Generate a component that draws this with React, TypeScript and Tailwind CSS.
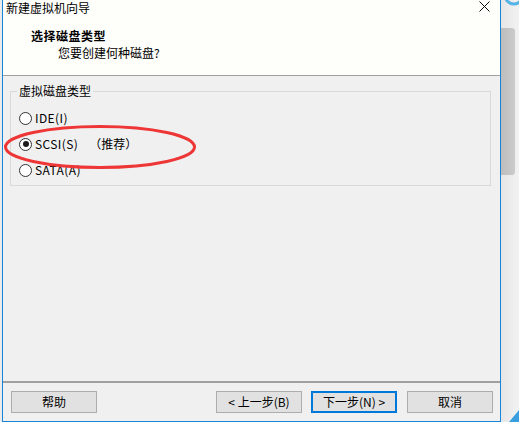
import React from 'react';

const font = { fontFamily: '"Noto Sans CJK SC", "Microsoft YaHei", sans-serif' };

const Radio: React.FC<{ checked?: boolean; label: string; extra?: string }> = ({ checked, label, extra }) => (
  <div className="flex h-[26px] items-center">
    <span className="flex h-[13px] w-[13px] items-center justify-center rounded-full border border-[#333] bg-white">
      {checked && <span className="h-[6px] w-[6px] rounded-full bg-[#1a1a1a]" />}
    </span>
    <span className="ml-[3px] text-[12px] leading-none tracking-[0.4px] text-black">{label}</span>
    {extra && <span className="ml-[11px] text-[12px] leading-none text-black">{extra}</span>}
  </div>
);

const Button: React.FC<{ label: string; primary?: boolean }> = ({ label, primary }) => (
  <button
    className={
      primary
        ? 'flex h-[22px] w-[86px] items-center justify-center border-2 border-[#0078d7] bg-[#e1e1e1] text-[12px] text-black'
        : 'flex h-[22px] w-[86px] items-center justify-center border border-[#adadad] bg-[#e1e1e1] text-[12px] text-black'
    }
  >
    {label}
  </button>
);

export default function App() {
  return (
    <div className="relative flex h-[422px] w-[519px] overflow-hidden bg-[#ebebeb]" style={font}>
      {/* window */}
      <div className="ml-[2px] flex h-[422px] w-[499px] flex-col border-x border-b border-[#1883d7] bg-[#f0f0f0]">
        {/* title bar */}
        <div className="flex h-[20px] items-start justify-between bg-[#fefefb] pl-[3px] pr-[10px]">
          <span className="text-[12px] leading-[15px] text-black">新建虚拟机向导</span>
          <svg width="11" height="11" viewBox="0 0 11 11" className="mt-[1px]">
            <path d="M0.5 0.5 L10.5 10.5 M10.5 0.5 L0.5 10.5" stroke="#111" strokeWidth="1" />
          </svg>
        </div>
        {/* header */}
        <div className="h-[56px] border-b border-[#a0a0a0] bg-[#fefefb] pl-[28px] pt-[9px]">
          <div className="text-[12px] font-bold leading-[14px] tracking-[0.5px] text-black">选择磁盘类型</div>
          <div className="ml-[27px] mt-[3px] text-[12px] leading-[14px] text-black">您要创建何种磁盘?</div>
        </div>
        {/* body */}
        <div className="flex-1 px-[7px] pt-[15px]">
          <div className="relative h-[95px] w-[481px] border border-[#d9d9d9]">
            <span className="absolute -top-[8px] left-[6px] bg-[#f0f0f0] px-[2px] text-[12px] leading-[14px] text-black">
              虚拟磁盘类型
            </span>
            <div className="pl-[8px] pt-[13px]">
              <Radio label="IDE(I)" />
              <Radio label="SCSI(S)" extra="（推荐）" checked />
              <Radio label="SATA(A)" />
            </div>
          </div>
        </div>
        {/* footer */}
        <div className="flex h-[40px] items-start border-t-2 border-[#a0a0a0] pl-[8px] pt-[8px]">
          <Button label="帮助" />
          <div className="ml-[119px] flex gap-[9px]">
            <Button label="< 上一步(B)" />
            <Button label="下一步(N) >" primary />
          </div>
          <div className="ml-[10px]">
            <Button label="取消" />
          </div>
        </div>
      </div>

      {/* desktop behind the window */}
      <div className="relative flex-1 bg-gradient-to-r from-[#e6e6e6] to-[#f2f2f2]">
        <div className="absolute left-0 top-[28px] h-[147px] w-[14px] rounded-r-[3px] bg-gradient-to-r from-[#bdbdbd] to-[#cbcbcb]" />
        <svg className="absolute -top-[14px] left-[2px]" width="22" height="22" viewBox="0 0 22 22">
          <circle cx="11" cy="9" r="9" fill="none" stroke="#55b3e8" strokeWidth="3" />
        </svg>
        <svg className="absolute bottom-0 right-0" width="10" height="12" viewBox="0 0 10 12">
          <polygon points="10,0 10,12 0,12" fill="#3a9fe0" />
        </svg>
      </div>

      {/* red annotation ellipse */}
      <svg className="pointer-events-none absolute left-[3px] top-[124px]" width="194" height="48" viewBox="0 0 194 48">
        <ellipse cx="97" cy="23" rx="94.5" ry="20.5" fill="none" stroke="#ee3636" strokeWidth="3" />
      </svg>
    </div>
  );
}
